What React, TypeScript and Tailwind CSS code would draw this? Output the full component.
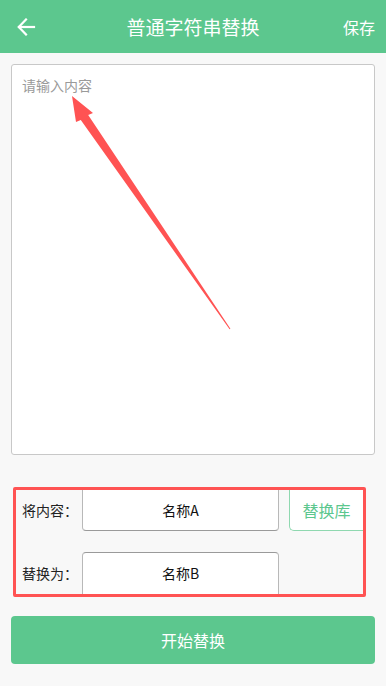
import React from "react";

const font = { fontFamily: '"Noto Sans CJK SC", "Noto Sans", sans-serif' };

export default function App() {
  return (
    <div
      className="relative w-full h-[686px] bg-[#f8f8f8] flex flex-col overflow-hidden"
      style={font}
    >
      {/* Header */}
      <div className="h-[53px] bg-[#5cc78e] flex items-center justify-between pl-[17px] pr-[11px] shrink-0 relative">
        <svg width="19" height="18" viewBox="0 0 19 18" fill="none" stroke="white" strokeWidth="2.2" strokeLinecap="square">
          <path d="M2 9 H17" />
          <path d="M9 1.5 L1.8 9 L9 16.5" strokeLinejoin="miter" />
        </svg>
        <div className="absolute left-0 right-0 text-center text-white text-[19px] leading-none pointer-events-none">
          普通字符串替换
        </div>
        <div className="text-white text-[16px] leading-none">保存</div>
      </div>

      {/* Textarea */}
      <div className="mx-[11px] mt-[11px] h-[391px] bg-white border border-[#c8c8c8] rounded-[3px] px-[10px] pt-[10px] shrink-0">
        <div className="text-[14px] leading-[20px] text-[#9a9a9a]">请输入内容</div>
      </div>

      {/* Form area with red annotation border */}
      <div className="mt-[32px] ml-[13px] w-[353px] h-[110px] border-[3px] border-[#ff5353] rounded-[2px] flex flex-col shrink-0">
        <div className="flex h-[41px] items-stretch">
          <div className="w-[66px] pl-[6px] flex items-center text-[14px] text-[#222]">将内容：</div>
          <div className="w-[197px] bg-white border-x border-b border-x-[#b8b8b8] border-b-[#9a9a9a] rounded-b-[4px] flex items-center justify-center text-[14px] text-[#111]">
            名称A
          </div>
          <div className="ml-[10px] flex-1 bg-white border-l border-b border-[#8fd8b0] rounded-bl-[5px] flex items-center justify-center text-[16px] text-[#5cc78e]">
            替换库
          </div>
        </div>
        <div className="flex h-[42px] mt-[21px] items-stretch">
          <div className="w-[66px] pl-[6px] flex items-center text-[14px] text-[#222]">替换为：</div>
          <div className="w-[197px] bg-white border-x border-t border-x-[#b8b8b8] border-t-[#9a9a9a] rounded-t-[4px] flex items-center justify-center text-[14px] text-[#111]">
            名称B
          </div>
        </div>
      </div>

      {/* Start button */}
      <div className="mt-[19px] mx-[11px] h-[48px] bg-[#5cc78e] rounded-[4px] flex items-center justify-center text-white text-[16px] shrink-0">
        开始替换
      </div>

      {/* Annotation arrow */}
      <svg
        className="absolute left-0 top-0 pointer-events-none"
        width="386"
        height="686"
        viewBox="0 0 386 686"
      >
        <polygon
          fill="#ff5353"
          points="72,96 93,113 88.2,115 230.4,328.7 229.6,329.3 80.8,120 76,122"
        />
      </svg>
    </div>
  );
}
